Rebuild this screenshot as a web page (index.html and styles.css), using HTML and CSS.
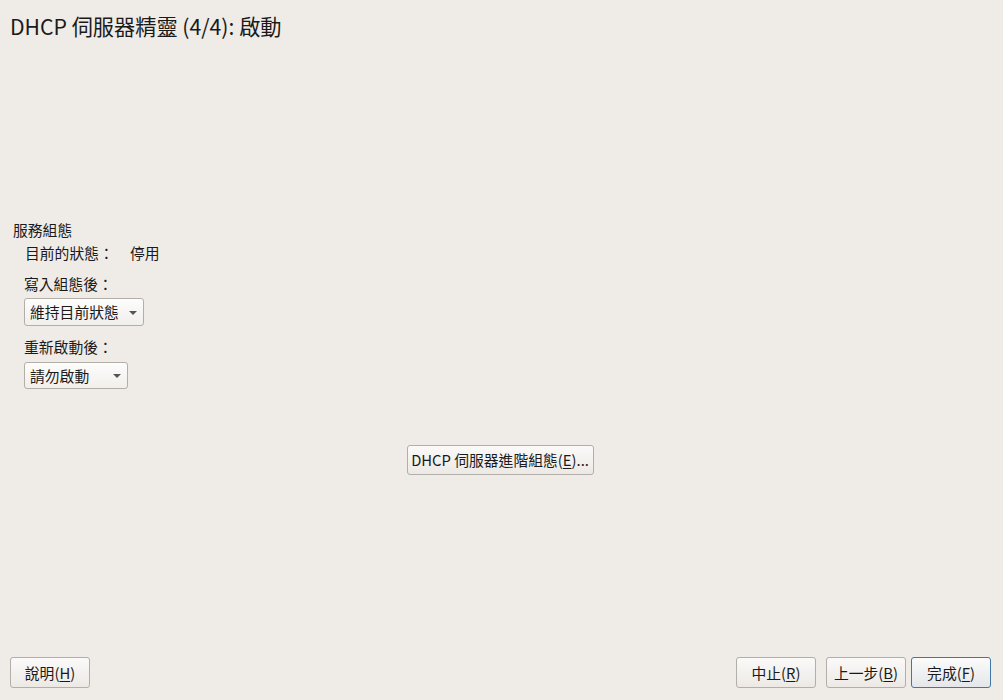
FILE: index.html
```html
<!DOCTYPE html>
<html lang="zh-Hant">
<head>
<meta charset="utf-8">
<link rel="stylesheet" href="styles.css">
</head>
<body>
<div class="window">
  <h1 class="title">DHCP 伺服器精靈 (4/4): 啟動</h1>
  <div class="main">
    <div class="group">
      <div class="group-title">服務組態</div>
      <div class="status-row">
        <span class="status-label">目前的狀態：</span>
        <span class="status-value">停用</span>
      </div>
      <div class="field">
        <div class="field-label">寫入組態後：</div>
        <div class="combo combo-a"><span>維持目前狀態</span><span class="arrow"></span></div>
      </div>
      <div class="field">
        <div class="field-label">重新啟動後：</div>
        <div class="combo combo-b"><span>請勿啟動</span><span class="arrow"></span></div>
      </div>
    </div>
    <div class="center-row">
      <button class="btn btn-adv">DHCP 伺服器進階組態(<u>E</u>)...</button>
    </div>
  </div>
  <div class="bottom">
    <button class="btn btn-nav">說明(<u>H</u>)</button>
    <div class="right">
      <button class="btn btn-nav">中止(<u>R</u>)</button>
      <button class="btn btn-nav btn-back">上一步(<u>B</u>)</button>
      <button class="btn btn-nav btn-default">完成(<u>F</u>)</button>
    </div>
  </div>
</div>
</body>
</html>
```

FILE: styles.css
```css
* { box-sizing: border-box; }
html, body {
  margin: 0;
  padding: 0;
  background: #efebe7;
}
body {
  font-family: "Noto Sans CJK TC", "Noto Sans", sans-serif;
  font-size: 14.8px;
  color: #1a1a1a;
}
.window {
  width: 1003px;
  height: 700px;
  display: flex;
  flex-direction: column;
}
.title {
  margin: 0;
  padding: 11px 0 0 10px;
  font-size: 21.2px;
  font-weight: normal;
  line-height: 30px;
  height: 41px;
}
.main {
  flex: 1;
  display: flex;
  flex-direction: column;
  padding-top: 179px;
}
.group {
  padding-left: 13px;
}
.group-title {
  line-height: 20px;
}
.status-row {
  display: flex;
  padding-left: 12px;
  margin-top: 3px;
  line-height: 20px;
}
.status-label { width: 105px; }
.field {
  padding-left: 11px;
  margin-top: 11px;
}
.field + .field { margin-top: 11px; }
.field-label {
  line-height: 20px;
}
.combo {
  margin-top: 4px;
  height: 28px;
  display: flex;
  align-items: center;
  justify-content: space-between;
  padding: 0 6px 0 5px;
  border: 1px solid #b3aea8;
  border-radius: 3px;
  background: linear-gradient(#fdfdfc, #f1efec);
  line-height: 20px;
}
.combo-a { width: 120px; }
.combo-b { width: 104px; height: 27px; margin-top: 5px; }
.arrow {
  width: 0;
  height: 0;
  border-left: 4px solid transparent;
  border-right: 4px solid transparent;
  border-top: 4px solid #555;
  margin-top: 1px;
}
.center-row {
  display: flex;
  justify-content: center;
  margin-top: 56px;
}
.btn {
  font-family: "Noto Sans CJK TC", "Noto Sans", sans-serif;
  font-size: 14.8px;
  color: #1a1a1a;
  border: 1px solid #b3aea8;
  border-radius: 3px;
  background: linear-gradient(#fbfaf9, #ece9e5);
  padding: 0;
  line-height: 20px;
  white-space: nowrap;
}
.btn u { text-underline-offset: 2px; }
.btn-adv {
  width: 187px;
  height: 30px;
  margin-left: -3px;
}
.bottom {
  display: flex;
  justify-content: space-between;
  padding: 0 12px 12px 10px;
}
.right {
  display: flex;
  gap: 10px;
}
.btn-nav {
  width: 80px;
  height: 31px;
}
.btn-back { margin-right: -5px; }
.btn-default {
  border-color: #3f78a8;
  background: linear-gradient(#fbfbfb, #e4e6e9);
}
```
